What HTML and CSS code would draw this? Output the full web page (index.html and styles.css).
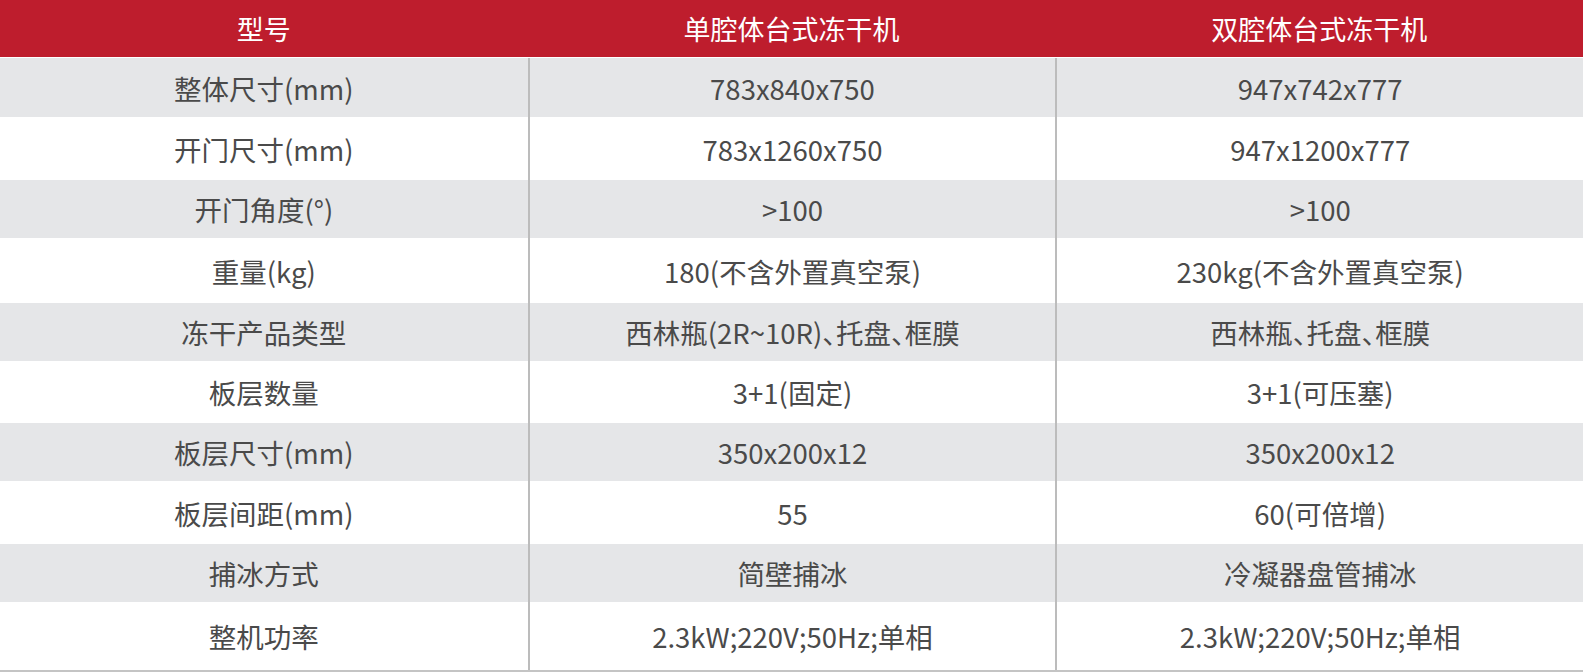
FILE: index.html
```html
<!DOCTYPE html>
<html lang="zh-CN">
<head>
<meta charset="utf-8">
<title>冻干机参数</title>
<link rel="stylesheet" href="styles.css">
</head>
<body>
<div class="spec">
  <div class="hd">型号</div>
  <div class="hd">单腔体台式冻干机</div>
  <div class="hd">双腔体台式冻干机</div>

  <div class="c alt">整体尺寸(mm)</div>
  <div class="c alt div">783x840x750</div>
  <div class="c alt div">947x742x777</div>

  <div class="c">开门尺寸(mm)</div>
  <div class="c div">783x1260x750</div>
  <div class="c div">947x1200x777</div>

  <div class="c alt">开门角度(°)</div>
  <div class="c alt div">&gt;100</div>
  <div class="c alt div">&gt;100</div>

  <div class="c">重量(kg)</div>
  <div class="c div">180(不含外置真空泵)</div>
  <div class="c div">230kg(不含外置真空泵)</div>

  <div class="c alt">冻干产品类型</div>
  <div class="c alt div">西林瓶(2R~10R)、托盘、框膜</div>
  <div class="c alt div">西林瓶、托盘、框膜</div>

  <div class="c">板层数量</div>
  <div class="c div">3+1(固定)</div>
  <div class="c div">3+1(可压塞)</div>

  <div class="c alt">板层尺寸(mm)</div>
  <div class="c alt div">350x200x12</div>
  <div class="c alt div">350x200x12</div>

  <div class="c">板层间距(mm)</div>
  <div class="c div">55</div>
  <div class="c div">60(可倍增)</div>

  <div class="c alt">捕冰方式</div>
  <div class="c alt div">简壁捕冰</div>
  <div class="c alt div">冷凝器盘管捕冰</div>

  <div class="c">整机功率</div>
  <div class="c div">2.3kW;220V;50Hz;单相</div>
  <div class="c div">2.3kW;220V;50Hz;单相</div>
</div>
</body>
</html>
```

FILE: styles.css
```css
html, body {
  margin: 0;
  padding: 0;
  background: #ffffff;
}

body {
  font-family: "Noto Sans CJK SC", "Noto Sans", sans-serif;
  overflow: hidden;
}

.spec {
  display: grid;
  grid-template-columns: 1fr 1fr 1fr;
  grid-template-rows: 58px 59px 63px 58px 65px 58px 62px 58px 63px 58px 68px;
  border-bottom: 2px solid #c4c4c4;
  width: 1583px;
}

.hd {
  background: #be1d2d;
  color: #ffffff;
  font-size: 27px;
  border-bottom: 1px solid #ffffff;
  display: flex;
  align-items: center;
  justify-content: center;
  box-sizing: border-box;
  padding-bottom: 1px;
}

.c {
  display: flex;
  align-items: center;
  justify-content: center;
  font-size: 27.5px;
  color: #4a4a4a;
  box-sizing: border-box;
  white-space: nowrap;
  font-feature-settings: "halt";
}

.alt {
  background: #e5e6e8;
}

.div {
  border-left: 2px solid #bcbcbc;
}
```
